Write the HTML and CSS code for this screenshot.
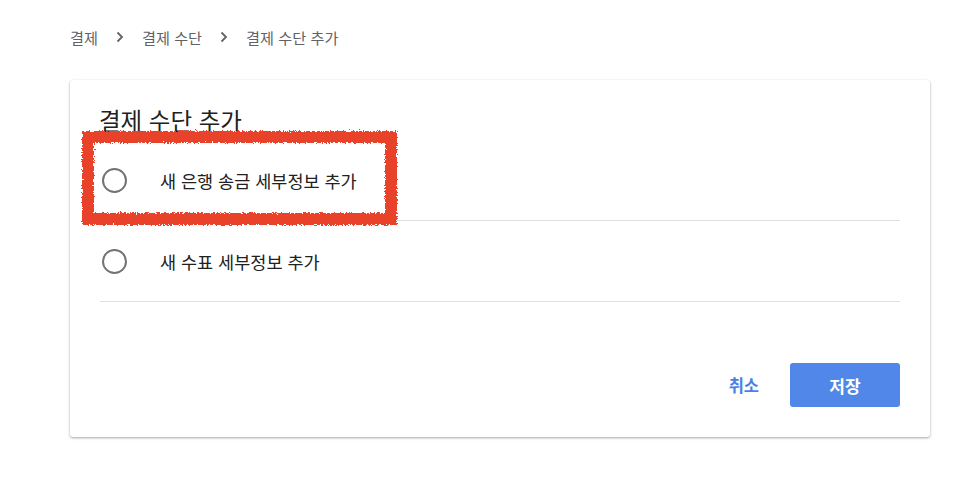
FILE: index.html
```html
<!DOCTYPE html>
<html lang="ko">
<head>
<meta charset="utf-8">
<link rel="stylesheet" href="styles.css">
</head>
<body>
<svg class="defs" width="0" height="0" aria-hidden="true">
  <filter id="rough" x="-10%" y="-10%" width="120%" height="120%">
    <feTurbulence type="fractalNoise" baseFrequency="0.7" numOctaves="3" seed="3" result="n"/>
    <feDisplacementMap in="SourceGraphic" in2="n" scale="5" xChannelSelector="R" yChannelSelector="G"/>
  </filter>
</svg>
<nav class="crumbs">
  <span>결제</span>
  <svg class="chev" width="8" height="12" viewBox="0 0 8 12"><path d="M1.5 1.5 L6 6 L1.5 10.5" fill="none" stroke="#5f6368" stroke-width="1.8"/></svg>
  <span>결제 수단</span>
  <svg class="chev" width="8" height="12" viewBox="0 0 8 12"><path d="M1.5 1.5 L6 6 L1.5 10.5" fill="none" stroke="#5f6368" stroke-width="1.8"/></svg>
  <span>결제 수단 추가</span>
</nav>
<main class="card">
  <h1 class="title">결제 수단 추가</h1>
  <label class="row"><span class="radio"></span><span class="label">새 은행 송금 세부정보 추가</span></label>
  <label class="row"><span class="radio"></span><span class="label">새 수표 세부정보 추가</span></label>
  <div class="actions">
    <button class="btn-text">취소</button>
    <button class="btn-primary">저장</button>
  </div>
  <div class="mark"></div>
</main>
</body>
</html>
```
FILE: styles.css
```css
html, body { margin: 0; padding: 0; background: #fff; }
body {
  font-family: "Noto Sans CJK KR", "Noto Sans", sans-serif;
  color: #212121;
  width: 976px;
  height: 485px;
  overflow: hidden;
}
.defs { position: absolute; }
.crumbs {
  display: flex;
  align-items: center;
  gap: 18px;
  padding: 26px 0 0 70px;
  height: 22px;
  font-size: 15.2px;
  color: #5f6368;
}
.chev { display: block; }
.card {
  position: relative;
  margin: 32px 0 0 70px;
  width: 860px;
  box-sizing: border-box;
  height: 357px;
  padding: 24px 30px 30px 30px;
  background: #fff;
  border-radius: 3px;
  box-shadow: 0 1px 3px rgba(0,0,0,0.25), 0 1px 2px rgba(0,0,0,0.12);
  display: flex;
  flex-direction: column;
}
.title {
  margin: 0 0 4px -1px;
  font-size: 23.5px;
  line-height: 32px;
  font-weight: 400;
  color: #212121;
}
.row {
  display: flex;
  align-items: center;
  height: 80px;
  border-bottom: 1px solid #e0e0e0;
  padding-left: 2px;
}
.radio {
  width: 25px;
  height: 25px;
  box-sizing: border-box;
  border: 2px solid #737373;
  border-radius: 50%;
  flex: none;
}
.label {
  margin-left: 33px;
  font-size: 17.5px;
  color: #212121;
}
.actions {
  margin-top: auto;
  display: flex;
  justify-content: flex-end;
  align-items: center;
  gap: 31px;
}
.btn-text {
  border: 0;
  background: none;
  padding: 0;
  font: inherit;
  font-size: 16.5px;
  font-weight: 700;
  color: #4a80e4;
}
.btn-primary {
  border: 0;
  width: 110px;
  height: 44px;
  border-radius: 3px;
  background: #5087e8;
  color: #fff;
  font: inherit;
  font-size: 17px;
  font-weight: 700;
}
.mark {
  position: absolute;
  left: 12px;
  top: 51px;
  width: 315px;
  height: 94px;
  box-sizing: border-box;
  border: 12px solid #e8432a;
  filter: url(#rough);
}
```
